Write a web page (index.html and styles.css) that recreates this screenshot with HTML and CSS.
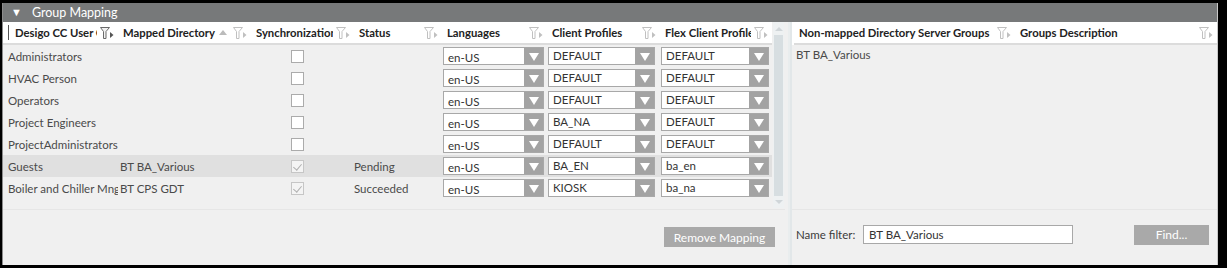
FILE: index.html
```html
<!DOCTYPE html>
<html lang="en">
<head>
    <meta charset="UTF-8">
    <title>Group Mapping</title>
    <link rel="stylesheet" href="styles.css">
</head>
<body>

    <div class="panel">
        <div class="title"><span class="caret">&#9660;</span>Group Mapping</div>

        <div class="content">
            <!-- left: mapped groups -->
            <div class="left">
                <div class="table">
                    <div class="grid">
                        <div class="head first"><span>Desigo CC User Gr</span><svg class="filter on" viewBox="0 0 14 12"><polygon points="0.5,0.5 9.5,0.5 6,4.5 6,11.5 3.5,11.5 3.5,4.5"/><polygon class="tri" points="10,5 13.5,8 10,11"/></svg></div>
                        <div class="head"><span>Mapped Directory</span><b class="sort"></b><svg class="filter" viewBox="0 0 14 12"><polygon points="0.5,0.5 9.5,0.5 6,4.5 6,11.5 3.5,11.5 3.5,4.5"/><polygon class="tri" points="10,5 13.5,8 10,11"/></svg></div>
                        <div class="head"><span>Synchronization</span><svg class="filter" viewBox="0 0 14 12"><polygon points="0.5,0.5 9.5,0.5 6,4.5 6,11.5 3.5,11.5 3.5,4.5"/><polygon class="tri" points="10,5 13.5,8 10,11"/></svg></div>
                        <div class="head"><span>Status</span><svg class="filter" viewBox="0 0 14 12"><polygon points="0.5,0.5 9.5,0.5 6,4.5 6,11.5 3.5,11.5 3.5,4.5"/><polygon class="tri" points="10,5 13.5,8 10,11"/></svg></div>
                        <div class="head"><span>Languages</span><svg class="filter" viewBox="0 0 14 12"><polygon points="0.5,0.5 9.5,0.5 6,4.5 6,11.5 3.5,11.5 3.5,4.5"/><polygon class="tri" points="10,5 13.5,8 10,11"/></svg></div>
                        <div class="head"><span>Client Profiles</span><svg class="filter" viewBox="0 0 14 12"><polygon points="0.5,0.5 9.5,0.5 6,4.5 6,11.5 3.5,11.5 3.5,4.5"/><polygon class="tri" points="10,5 13.5,8 10,11"/></svg></div>
                        <div class="head"><span>Flex Client Profile</span><svg class="filter" viewBox="0 0 14 12"><polygon points="0.5,0.5 9.5,0.5 6,4.5 6,11.5 3.5,11.5 3.5,4.5"/><polygon class="tri" points="10,5 13.5,8 10,11"/></svg></div>
                    </div>
                    <div id="rows"></div>
                    <div class="scroll"><b class="up"></b><div class="thumb"></div><b class="down"></b></div>
                </div>
                <div class="actions">
                    <button class="btn remove">Remove Mapping</button>
                </div>
            </div>

            <div class="split"></div>

            <!-- right: non-mapped groups -->
            <div class="right">
                <div class="rtable">
                    <div class="rhead">
                        <div class="head wide"><span>Non-mapped Directory Server Groups</span><svg class="filter" viewBox="0 0 14 12"><polygon points="0.5,0.5 9.5,0.5 6,4.5 6,11.5 3.5,11.5 3.5,4.5"/><polygon class="tri" points="10,5 13.5,8 10,11"/></svg></div>
                        <div class="head grow"><span>Groups Description</span><svg class="filter" viewBox="0 0 14 12"><polygon points="0.5,0.5 9.5,0.5 6,4.5 6,11.5 3.5,11.5 3.5,4.5"/><polygon class="tri" points="10,5 13.5,8 10,11"/></svg></div>
                    </div>
                    <div class="rrow">BT BA_Various</div>
                </div>
                <div class="actions find">
                    <label class="lbl">Name filter:</label>
                    <input class="namefilter" type="text" value="BT BA_Various">
                    <button class="btn findbtn">Find...</button>
                </div>
            </div>
        </div>
    </div>

    <script>
        const rows = [
            ['Administrators', '', false, '', 'en-US', 'DEFAULT', 'DEFAULT'],
            ['HVAC Person', '', false, '', 'en-US', 'DEFAULT', 'DEFAULT'],
            ['Operators', '', false, '', 'en-US', 'DEFAULT', 'DEFAULT'],
            ['Project Engineers', '', false, '', 'en-US', 'BA_NA', 'DEFAULT'],
            ['ProjectAdministrators', '', false, '', 'en-US', 'DEFAULT', 'DEFAULT'],
            ['Guests', 'BT BA_Various', true, 'Pending', 'en-US', 'BA_EN', 'ba_en'],
            ['Boiler and Chiller Mng', 'BT CPS GDT', true, 'Succeeded', 'en-US', 'KIOSK', 'ba_na']
        ]
        const box = document.getElementById('rows')

        function combo(v, cls) {
            return '<div class="combo ' + cls + '"><span>' + v + '</span><b></b></div>'
        }

        rows.forEach((r, i) => {
            const row = document.createElement('div')
            row.className = 'grid row' + (i == 5 ? ' sel' : '')
            row.innerHTML =
                '<div class="c1">' + r[0] + '</div>' +
                '<div class="c2">' + r[1] + '</div>' +
                '<div class="c3"><span class="check' + (r[2] ? ' done' : '') + '"></span></div>' +
                '<div class="c4">' + r[3] + '</div>' +
                '<div class="c5">' + combo(r[4], 'lang') + '</div>' +
                '<div class="c6">' + combo(r[5], 'prof') + '</div>' +
                '<div class="c7">' + combo(r[6], 'flex') + '</div>'
            box.appendChild(row)
        })
    </script>

</body>
</html>
```

FILE: styles.css
```css
* {
    box-sizing: border-box;
}
body {
    margin: 0;
    background: #000;
    font-family: Lato, "Liberation Sans", sans-serif;
    font-size: 11.5px;
    color: #3c3c3c;
}
.panel {
    margin: 3px 9px 3px 2px;
    height: 262px;
    background: #f0f0f0;
    border-left: 1px solid #8c8c8c;
    border-right: 1px solid #c8c8c8;
    display: flex;
    flex-direction: column;
}
.title {
    height: 19px;
    background: #77797a;
    color: #fff;
    font-size: 12.5px;
    line-height: 19px;
    padding-left: 8px;
}
.caret {
    font-size: 11px;
    margin-right: 10px;
    position: relative;
    top: -1px;
}
.content {
    flex: 1;
    display: flex;
}
.left {
    width: 783px;
    display: flex;
    flex-direction: column;
}
.table {
    height: 188px;
    position: relative;
    border-bottom: 1px solid #e6e6e6;
}
.grid {
    display: grid;
    grid-template-columns: 115px 133px 103px 88px 105px 113px 112px;
    width: 769px;
}
.head {
    height: 23px;
    background: #fff;
    border-bottom: 2px solid #dcdcdc;
    display: flex;
    align-items: center;
    font-weight: bold;
    font-size: 11.3px;
    color: #222;
    white-space: nowrap;
    overflow: hidden;
}
.head span {
    flex: 1;
    overflow: hidden;
    padding-left: 5px;
    margin-left: -1px;
    border-left: 1px solid #555;
    line-height: 15px;
}
.head.first span {
    margin-left: 5px;
    padding-left: 6px;
}
/* funnel + little arrow */
.filter {
    width: 14px;
    height: 12px;
    margin: 0 4px 0 3px;
    flex: none;
}
.filter polygon {
    fill: #fff;
    stroke: #c0c0c0;
    stroke-width: 1;
}
.filter .tri {
    fill: #c0c0c0;
    stroke: none;
}
.filter.on polygon {
    fill: #f2f2f2;
    stroke: #6a6a6a;
}
.filter.on .tri {
    fill: #555;
    stroke: none;
}
.sort {
    width: 0;
    height: 0;
    border-left: 4px solid transparent;
    border-right: 4px solid transparent;
    border-bottom: 5px solid #bbb;
    margin-right: 3px;
    flex: none;
}
.row {
    height: 22px;
    align-items: center;
    color: #4a4a4a;
}
.row > div {
    white-space: nowrap;
    overflow: hidden;
}
.row.sel {
    background: #e0e0e0;
}
.c1 {
    padding-left: 5px;
}
.c2 {
    padding-left: 2px;
}
.c3 {
    padding-left: 40px;
    height: 13px;
}
.check {
    display: block;
    width: 13px;
    height: 13px;
    border: 1px solid #ababab;
    background: #fff;
    position: relative;
}
.check.done {
    background: #f4f4f4;
    border-color: #c6c6c6;
}
.check.done::after {
    content: "";
    position: absolute;
    left: 3px;
    top: 1px;
    width: 4px;
    height: 7px;
    border-right: 1.5px solid #b0b0b0;
    border-bottom: 1.5px solid #b0b0b0;
    transform: rotate(40deg);
}
.c5, .c6, .c7 {
    padding-left: 1px;
}
.combo {
    height: 18px;
    border: 1px solid #a8a8a8;
    background: #fff;
    display: flex;
    color: #333;
}
.combo.lang {
    width: 101px;
}
.combo.prof {
    width: 107px;
}
.combo.flex {
    width: 108px;
}
.combo span {
    flex: 1;
    padding-left: 4px;
    line-height: 16px;
}
.combo.lang span {
    line-height: 19px;
}
.combo b {
    width: 19px;
    background: #a3a3a3;
    position: relative;
}
.combo b::after {
    content: "";
    position: absolute;
    left: 5px;
    top: 5px;
    border-top: 8px solid #fff;
    border-left: 5px solid transparent;
    border-right: 5px solid transparent;
}
.scroll {
    position: absolute;
    left: 770px;
    top: 0;
    width: 11px;
    height: 186px;
    background: #eef1f2;
}
.scroll .thumb {
    position: absolute;
    left: 1px;
    right: 1px;
    top: 13px;
    bottom: 12px;
    background: #d7dee1;
}
.scroll .up, .scroll .down {
    position: absolute;
    left: 2px;
    border-left: 4px solid transparent;
    border-right: 4px solid transparent;
}
.scroll .up {
    top: 5px;
    border-bottom: 4px solid #d0d6d9;
}
.scroll .down {
    bottom: 4px;
    border-top: 4px solid #d0d6d9;
}
.actions {
    flex: 1;
    display: flex;
    align-items: flex-start;
    justify-content: flex-end;
    padding: 17px 10px 0 0;
}
.btn {
    height: 20px;
    border: none;
    background: #a9a9a9;
    color: #fff;
    font-family: inherit;
    font-size: 12px;
    padding: 0;
}
.remove {
    width: 111px;
}
.split {
    width: 7px;
    border-left: 3px solid #f0f0f0;
    border-right: 2px solid #e2e7e9;
    background: #e9edee;
}
.right {
    flex: 1;
    display: flex;
    flex-direction: column;
}
.rtable {
    height: 188px;
    border-bottom: 1px solid #e6e6e6;
}
.rhead {
    display: flex;
    padding-left: 2px;
    background: #fff;
}
.head.wide {
    width: 221px;
}
.head.grow {
    flex: 1;
}
.rrow {
    padding: 3px 0 0 4px;
    color: #4a4a4a;
}
.find {
    justify-content: flex-start;
    align-items: center;
    padding: 0 8px 6px 4px;
}
.lbl {
    width: 67px;
}
.namefilter {
    width: 210px;
    height: 19px;
    border: 1px solid #a8a8a8;
    font-family: inherit;
    font-size: 11.5px;
    color: #333;
    padding: 0 0 0 5px;
    margin-right: 61px;
}
.findbtn {
    width: 75px;
}
```
